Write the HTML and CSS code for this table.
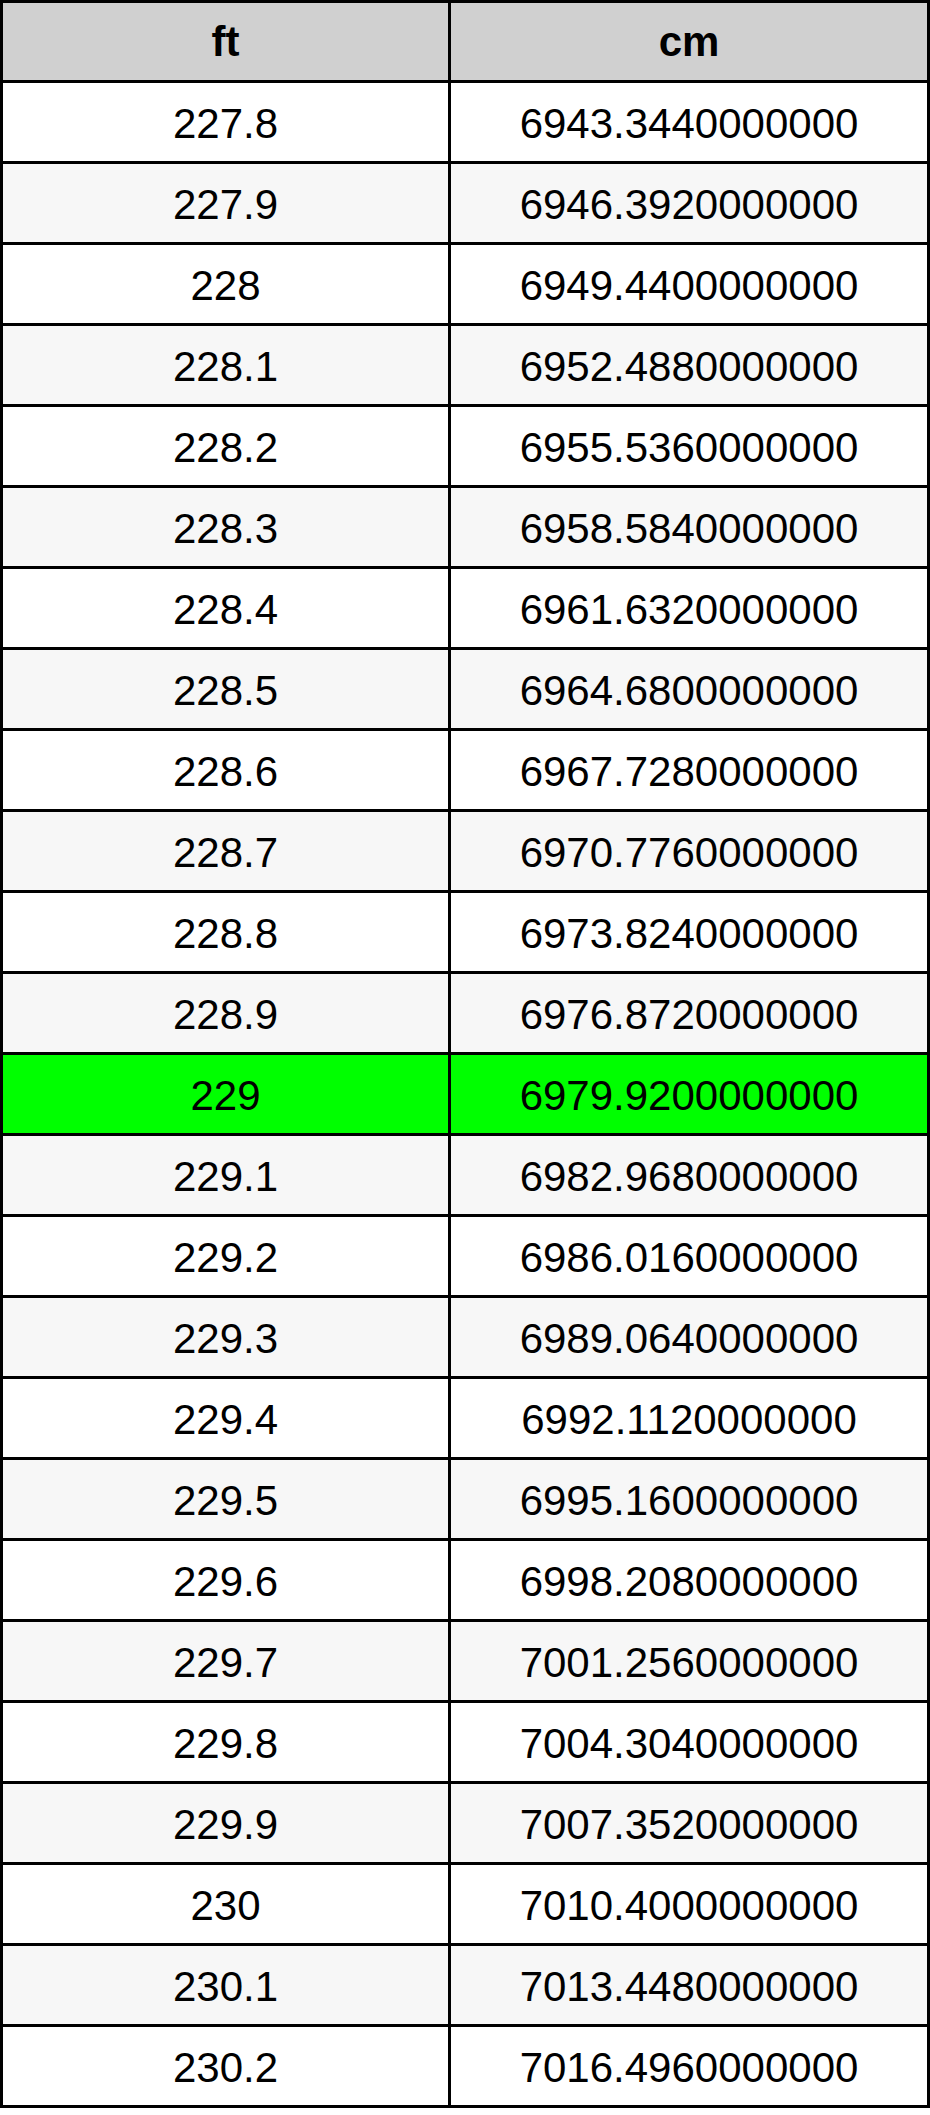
FILE: index.html
```html
<!DOCTYPE html>
<html>
<head>
<meta charset="utf-8">
<link rel="stylesheet" href="styles.css">
</head>
<body>
<table class="conv">
<thead>
<tr><th class="c1">ft</th><th class="c2">cm</th></tr>
</thead>
<tbody>
<tr><td>227.8</td><td>6943.3440000000</td></tr>
<tr class="alt"><td>227.9</td><td>6946.3920000000</td></tr>
<tr><td>228</td><td>6949.4400000000</td></tr>
<tr class="alt"><td>228.1</td><td>6952.4880000000</td></tr>
<tr><td>228.2</td><td>6955.5360000000</td></tr>
<tr class="alt"><td>228.3</td><td>6958.5840000000</td></tr>
<tr><td>228.4</td><td>6961.6320000000</td></tr>
<tr class="alt"><td>228.5</td><td>6964.6800000000</td></tr>
<tr><td>228.6</td><td>6967.7280000000</td></tr>
<tr class="alt"><td>228.7</td><td>6970.7760000000</td></tr>
<tr><td>228.8</td><td>6973.8240000000</td></tr>
<tr class="alt"><td>228.9</td><td>6976.8720000000</td></tr>
<tr class="hl"><td>229</td><td>6979.9200000000</td></tr>
<tr class="alt"><td>229.1</td><td>6982.9680000000</td></tr>
<tr><td>229.2</td><td>6986.0160000000</td></tr>
<tr class="alt"><td>229.3</td><td>6989.0640000000</td></tr>
<tr><td>229.4</td><td>6992.1120000000</td></tr>
<tr class="alt"><td>229.5</td><td>6995.1600000000</td></tr>
<tr><td>229.6</td><td>6998.2080000000</td></tr>
<tr class="alt"><td>229.7</td><td>7001.2560000000</td></tr>
<tr><td>229.8</td><td>7004.3040000000</td></tr>
<tr class="alt"><td>229.9</td><td>7007.3520000000</td></tr>
<tr><td>230</td><td>7010.4000000000</td></tr>
<tr class="alt"><td>230.1</td><td>7013.4480000000</td></tr>
<tr><td>230.2</td><td>7016.4960000000</td></tr>
</tbody>
</table>
</body>
</html>
```

FILE: styles.css
```css
html, body {
  margin: 0;
  padding: 0;
  background: #ffffff;
}

.conv {
  border-collapse: separate;
  border-spacing: 0;
  border-top: 3px solid #000;
  border-left: 3px solid #000;
  width: 930px;
  table-layout: fixed;
  font-family: "Liberation Sans", Arial, sans-serif;
  font-size: 42px;
  color: #000;
}

.conv th,
.conv td {
  border-right: 3px solid #000;
  border-bottom: 3px solid #000;
  padding: 0;
  text-align: center;
  vertical-align: middle;
  box-sizing: content-box;
}

.conv th {
  height: 77px;
  background: #d0d0d0;
  font-weight: bold;
}

.conv td {
  height: 74px;
  padding-top: 4px;
  background: #ffffff;
}

.conv .c1 {
  width: 445px;
}

.conv .c2 {
  width: 476px;
}

.conv tr.alt td {
  background: #f7f7f7;
}

.conv tr.hl td {
  background: #00ff00;
}
```
